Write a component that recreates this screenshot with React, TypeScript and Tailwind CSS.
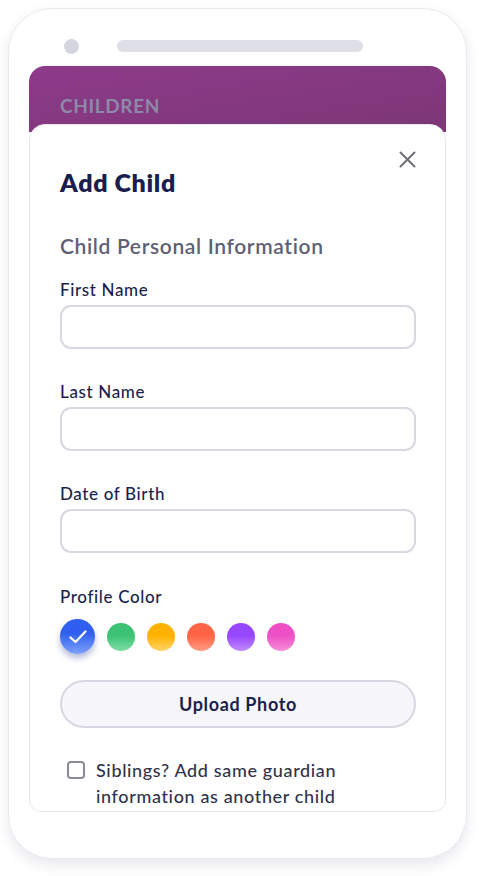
import React from "react";

const colors = [
  { from: "#3cc274", to: "#7fdca5" },
  { from: "#ffb300", to: "#ffd36a" },
  { from: "#ff6446", to: "#ff9c85" },
  { from: "#9747ff", to: "#c08bff" },
  { from: "#ee4fc4", to: "#f58fd9" },
];

function Field({ label }: { label: string }) {
  return (
    <div className="flex flex-col">
      <div className="text-[17px] leading-[22px] font-medium text-[#1c1f4d]">{label}</div>
      <div className="mt-[4px] h-[44px] rounded-[11px] border-2 border-[#d6d8e2] bg-white" />
    </div>
  );
}

export default function App() {
  return (
    <div
      className="w-[483px] h-[876px] bg-white pt-[8px] pl-[8px] tracking-[0.04em]"
      style={{ fontFamily: "Lato, 'Open Sans', sans-serif" }}
    >
      <div className="w-[459px] h-[851px] rounded-[44px] border border-[#e9eaf0] bg-white shadow-[0_6px_14px_rgba(30,35,80,0.10)] flex flex-col px-[20px]">
        <div className="flex items-center mt-[29px] h-[16px]">
          <div className="ml-[35px] w-[15px] h-[15px] rounded-full bg-[#d3d6df]" />
          <div className="ml-[38px] w-[246px] h-[12px] rounded-full bg-[#dfe0e7]" />
        </div>
        <div className="mt-[12px] h-[66px] rounded-t-[16px] bg-gradient-to-br from-[#8e3a8a] to-[#7c3776] pl-[31px] pt-[28px]">
          <div className="text-[19px] leading-[24px] font-bold text-[#8c8aa8]">CHILDREN</div>
        </div>
        <div className="-mt-[8px] h-[688px] rounded-[16px] rounded-b-[12px] border border-[#e6e7ee] bg-white pl-[30px] pr-[29px] flex flex-col relative">
          <svg className="absolute right-[29px] top-[26px]" width="17" height="17" viewBox="0 0 17 17">
            <path d="M1.5 1.5 L15.5 15.5 M15.5 1.5 L1.5 15.5" stroke="#707078" strokeWidth="2" strokeLinecap="round" />
          </svg>
          <div className="mt-[42px] text-[25px] leading-[30px] font-extrabold text-[#1a1d4e]">Add Child</div>
          <div className="mt-[36px] text-[21px] leading-[26px] font-semibold text-[#5f5f75]">Child Personal Information</div>
          <div className="mt-[20px] flex flex-col gap-[32px]">
            <Field label="First Name" />
            <Field label="Last Name" />
            <Field label="Date of Birth" />
          </div>
          <div className="mt-[33px] text-[17px] leading-[22px] font-medium text-[#1c1f4d]">Profile Color</div>
          <div className="mt-[11px] flex items-center">
            <div className="w-[35px] h-[35px] rounded-full bg-gradient-to-b from-[#2f5ef0] from-40% to-[#7f9ff8] shadow-[0_4px_6px_rgba(40,60,140,0.35)] flex items-center justify-center">
              <svg width="18" height="14" viewBox="0 0 18 14">
                <path d="M1.5 7.5 L6.5 12 L16.5 1.5" fill="none" stroke="white" strokeWidth="2.2" strokeLinecap="round" strokeLinejoin="round" />
              </svg>
            </div>
            {colors.map((c, i) => (
              <div
                key={i}
                className="w-[28px] h-[28px] rounded-full ml-[12px]"
                style={{ background: `linear-gradient(to bottom, ${c.from} 45%, ${c.to})` }}
              />
            ))}
          </div>
          <div className="mt-[26px] h-[48px] rounded-full border-2 border-[#d6d8e2] bg-[#f6f6fb] flex items-center justify-center text-[18px] font-bold text-[#1c1f4d]">
            Upload Photo
          </div>
          <div className="mt-[29px] flex items-start pl-[7px]">
            <div className="mt-[4px] w-[18px] h-[18px] rounded-[4px] border-2 border-[#8b8b98] bg-white shrink-0" />
            <div className="ml-[11px] text-[18px] leading-[26px] font-medium text-[#32324a]">
              Siblings? Add same guardian
              <br />
              information as another child
            </div>
          </div>
        </div>
      </div>
    </div>
  );
}
